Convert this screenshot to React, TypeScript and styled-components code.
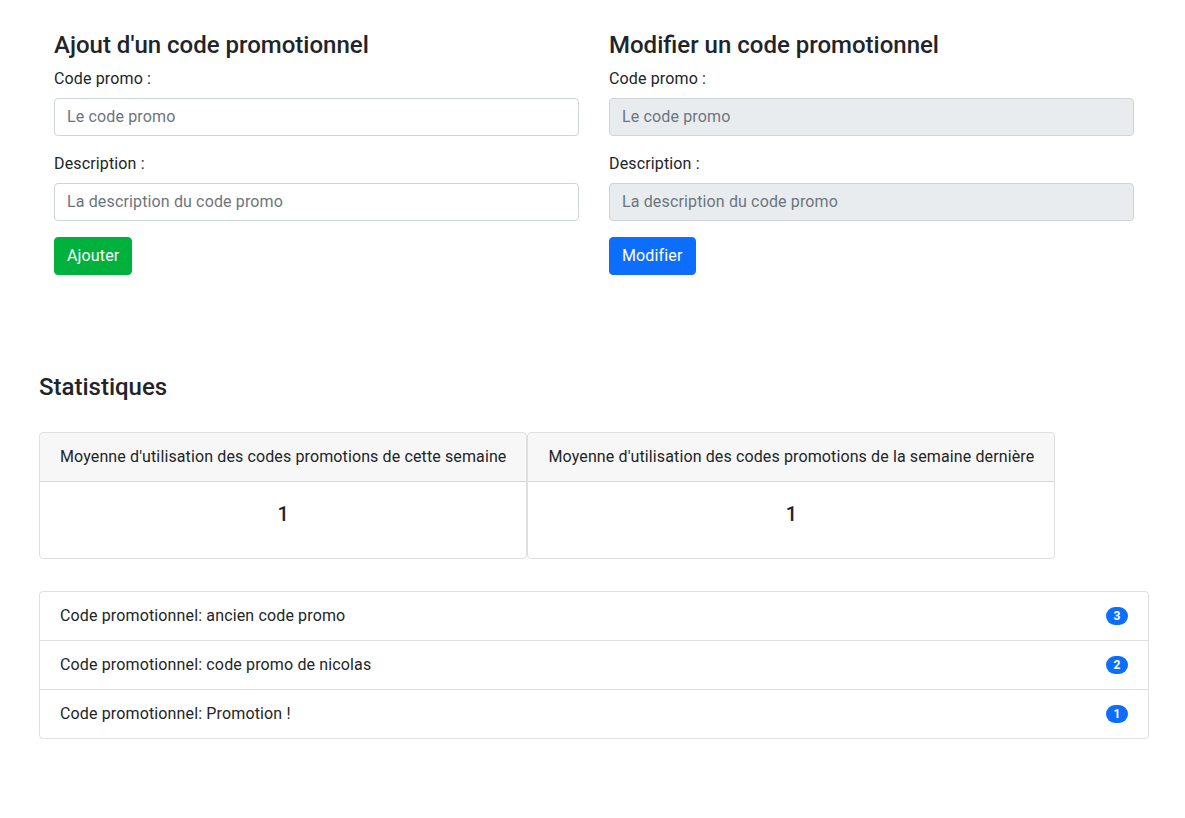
import React from "react";
import styled, { createGlobalStyle } from "styled-components";

const Global = createGlobalStyle`
  html, body { margin: 0; padding: 0; background: #fff; }
  body {
    font-family: Roboto, "Liberation Sans", Arial, sans-serif;
    font-size: 16px;
    line-height: 1.5;
    letter-spacing: 0.14px;
    color: #212529;
  }
  * { box-sizing: border-box; }
`;

const Page = styled.div`
  width: 1110px;
  margin-left: 39px;
  padding-top: 31px;
  padding-bottom: 80px;
`;

const FormRow = styled.div`
  display: grid;
  grid-template-columns: 1fr 1fr;
  column-gap: 30px;
  padding: 0 15px;
`;

const Form = styled.form`
  display: flex;
  flex-direction: column;
`;

const Title = styled.h4`
  margin: 0 0 7px;
  font-size: 24px;
  font-weight: 500;
  line-height: 1.2;
  letter-spacing: 0;
`;

const Group = styled.div`
  margin-bottom: 16px;
`;

const Label = styled.label`
  display: block;
  margin-bottom: 7px;
`;

const Input = styled.input<{ $disabled?: boolean }>`
  display: block;
  width: 100%;
  height: 38px;
  padding: 6px 12px;
  font: inherit;
  letter-spacing: inherit;
  color: #495057;
  background: ${(p) => (p.$disabled ? "#e9ecef" : "#fff")};
  border: 1px solid #ced4da;
  border-radius: 4px;
  outline: none;
  &::placeholder { color: #6c757d; opacity: 1; }
`;

const Button = styled.button<{ $color: string }>`
  align-self: flex-start;
  height: 38px;
  padding: 6px 12px;
  font: inherit;
  letter-spacing: inherit;
  color: #fff;
  background: ${(p) => p.$color};
  border: 1px solid ${(p) => p.$color};
  border-radius: 4px;
  cursor: pointer;
`;

const SectionTitle = styled.h4`
  margin: 98px 0 0;
  font-size: 24px;
  font-weight: 500;
  line-height: 1.2;
  letter-spacing: 0;
`;

const Cards = styled.div`
  display: flex;
  margin-top: 30px;
`;

const Card = styled.div`
  display: flex;
  flex-direction: column;
  border: 1px solid rgba(0, 0, 0, 0.125);
  border-radius: 4px;
  overflow: hidden;
`;

const CardHeader = styled.div`
  padding: 12px 20px;
  background: rgba(0, 0, 0, 0.03);
  border-bottom: 1px solid rgba(0, 0, 0, 0.125);
  text-align: center;
  letter-spacing: 0.12px;
`;

const CardBody = styled.div`
  padding: 20px;
  text-align: center;
`;

const CardValue = styled.h5`
  margin: 0 0 12px;
  font-size: 20px;
  font-weight: 500;
  line-height: 1.2;
`;

const List = styled.ul`
  margin: 32px 0 0;
  padding: 0;
  list-style: none;
  border: 1px solid rgba(0, 0, 0, 0.125);
  border-radius: 4px;
`;

const Item = styled.li`
  display: flex;
  align-items: center;
  justify-content: space-between;
  padding: 12px 20px;
  & + & { border-top: 1px solid rgba(0, 0, 0, 0.125); }
`;

const Badge = styled.span`
  display: inline-block;
  min-width: 22px;
  padding: 3px 7px;
  font-size: 12px;
  font-weight: 700;
  line-height: 1;
  letter-spacing: 0;
  color: #fff;
  text-align: center;
  background: #0d6efd;
  border-radius: 10rem;
`;

const stats = [
  { label: "Moyenne d'utilisation des codes promotions de cette semaine", value: 1 },
  { label: "Moyenne d'utilisation des codes promotions de la semaine dernière", value: 1 },
];

const codes = [
  { name: "ancien code promo", count: 3 },
  { name: "code promo de nicolas", count: 2 },
  { name: "Promotion !", count: 1 },
];

function PromoForm({ title, button, color, disabled }: { title: string; button: string; color: string; disabled?: boolean }) {
  return (
    <Form onSubmit={(e) => e.preventDefault()}>
      <Title>{title}</Title>
      <Group>
        <Label>Code promo :</Label>
        <Input $disabled={disabled} disabled={disabled} placeholder="Le code promo" />
      </Group>
      <Group>
        <Label>Description :</Label>
        <Input $disabled={disabled} disabled={disabled} placeholder="La description du code promo" />
      </Group>
      <Button type="submit" $color={color}>{button}</Button>
    </Form>
  );
}

export default function App() {
  return (
    <>
      <Global />
      <Page>
        <FormRow>
          <PromoForm title="Ajout d'un code promotionnel" button="Ajouter" color="#00b13e" />
          <PromoForm title="Modifier un code promotionnel" button="Modifier" color="#0d6efd" disabled />
        </FormRow>
        <SectionTitle>Statistiques</SectionTitle>
        <Cards>
          {stats.map((s) => (
            <Card key={s.label}>
              <CardHeader>{s.label}</CardHeader>
              <CardBody>
                <CardValue>{s.value}</CardValue>
              </CardBody>
            </Card>
          ))}
        </Cards>
        <List>
          {codes.map((c) => (
            <Item key={c.name}>
              <span>Code promotionnel: {c.name}</span>
              <Badge>{c.count}</Badge>
            </Item>
          ))}
        </List>
      </Page>
    </>
  );
}
